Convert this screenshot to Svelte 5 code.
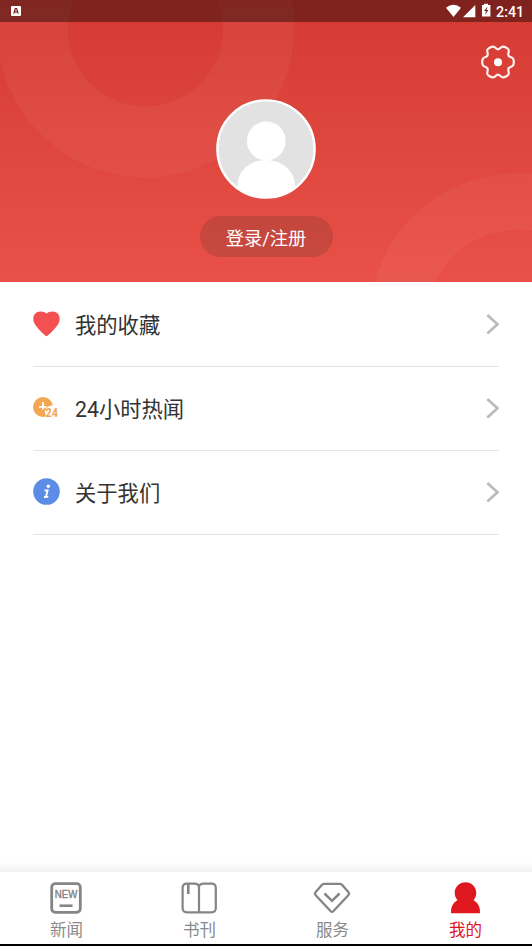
<script lang="ts">
	const rows = [
		{ icon: 'heart', label: '我的收藏' },
		{ icon: 'hot', label: '24小时热闻' },
		{ icon: 'about', label: '关于我们' }
	];

	const tabs = [
		{ icon: 'news', label: '新闻' },
		{ icon: 'book', label: '书刊' },
		{ icon: 'service', label: '服务' },
		{ icon: 'mine', label: '我的' }
	];

	let active = $state('mine');
</script>

<div class="screen">
	<header>
		<svg class="rings" width="532" height="282" viewBox="0 0 532 282">
			<circle cx="145.500" cy="29" r="113" stroke-width="71" />
			<circle cx="517.500" cy="321.600" r="120" stroke-width="56.500" />
		</svg>

		<div class="statusBar">
			<svg width="10" height="10" viewBox="0 0 10 10">
				<rect width="10" height="10" rx="1" fill="#fff" />
				<path d="M2.8 7.6L4.3 2.6H5.6L7.2 7.6M3.5 5.8H6.4" fill="none" stroke="#812620" stroke-width="1.3" />
			</svg>
			<div class="statusRight">
				<svg width="45" height="16" viewBox="0 0 45 16">
					<path d="M0 4.7Q7.5 -1 15 4.7L7.5 14z" fill="#fff" />
					<path d="M17 14.2L29.3 2V14.2z" fill="#fff" />
					<path d="M36 2H38V0.8H42V2H44.4V13.5H36z" fill="#fff" />
					<path d="M41.5 3.5L38 8H40L39 11.8L42.5 7H40.6z" fill="#812620" />
				</svg>
				<span class="clock">2:41</span>
			</div>
		</div>

		<button class="settings" aria-label="设置">
			<svg width="36" height="36" viewBox="-18 -18 36 36">
				<path
					d="M0-12.600C2-12.600 2.800-15.400 4.800-15.400C7-15.400 10.200-13.600 10.700-12C11.200-10 9.500-8 10.700-6.200C11.900-4.400 14.500-5 15.200-3.200C15.900-1.400 15.900 1.400 15.200 3.200C14.500 5 11.900 4.400 10.700 6.200C9.500 8 11.200 10 10.700 12C10.200 13.600 7 15.400 4.800 15.400C2.800 15.400 2 12.600 0 12.600C-2 12.600-2.800 15.400-4.800 15.400C-7 15.400-10.200 13.600-10.700 12C-11.200 10-9.500 8-10.700 6.200C-11.900 4.400-14.500 5-15.200 3.200C-15.900 1.400-15.900-1.400-15.200-3.200C-14.500-5-11.900-4.400-10.700-6.200C-9.500-8-11.200-10-10.700-12C-10.200-13.600-7-15.400-4.800-15.400C-2.800-15.400-2-12.600 0-12.600z"
					fill="none"
					stroke="#fff"
					stroke-opacity="0.93"
					stroke-width="2.200"
				/>
				<circle cy="0.3" r="4" fill="#fff" />
			</svg>
		</button>

		<svg class="avatar" width="100" height="100" viewBox="0 0 100 100">
			<defs>
				<clipPath id="face"><circle cx="50" cy="50" r="49" /></clipPath>
			</defs>
			<circle cx="50" cy="50" r="48.6" fill="#e2e2e2" stroke="#fff" stroke-width="2.4" />
			<g clip-path="url(#face)" fill="#fff">
				<circle cx="50.3" cy="42" r="19.4" />
				<path d="M21.5 92V86C22 71 35 61 50 61S78.500 71 79 86V100H21.500z" />
			</g>
		</svg>
		<button class="login">登录/注册</button>
	</header>

	<main>
		{#each rows as row}
			<div class="row">
				<svg class="rowIcon" width="28" height="28" viewBox="0 0 28 28">
					{#if row.icon == 'heart'}
						<path d="M13.500 26.200C12.500 26.200 8 22 4.500 17.800C2 14.800 0.300 12.300 0.300 8.800C0.300 4.500 3.400 1.500 7.200 1.500C10 1.500 12.300 2.300 13.500 3.600C14.700 2.300 17 1.500 19.800 1.500C23.600 1.500 26.700 4.500 26.700 8.800C26.700 12.300 25 14.800 22.500 17.800C19 22 14.500 26.200 13.500 26.200z" fill="#f44f51" />
					{:else if row.icon == 'hot'}
						<circle cx="10" cy="13" r="10" fill="#f3a653" />
						<path d="M10 8V15.500M6.200 12.800H13.500" stroke="#fff" stroke-width="1.800" fill="none" />
						<circle cx="19" cy="18.500" r="7" fill="#fff" />
						<path d="M13 14H25V23H13z" fill="#fff" />
						<text x="12.500" y="23" font-size="12.500" textLength="12.500" lengthAdjust="spacingAndGlyphs">24</text>
					{:else}
						<circle cx="13.500" cy="13.500" r="13.300" fill="#5c8de6" />
						<circle cx="15.300" cy="8.300" r="1.700" fill="#fff" />
						<path d="M11.500 12.300H14.600L13 18.800H15.300M11 19H13" stroke="#fff" stroke-width="1.800" fill="none" />
					{/if}
				</svg>
				<span>{row.label}</span>
				<svg class="chevron" width="14" height="22" viewBox="0 0 14 22">
					<path d="M2.300 1.900L12.500 11.200L2.300 20.500" />
				</svg>
			</div>
		{/each}
	</main>

	<nav>
		{#each tabs as tab}
			<button class="tab" class:active={active == tab.icon} onclick={() => (active = tab.icon)}>
				<svg width="38" height="34" viewBox="0 0 38 34">
					{#if tab.icon == 'news'}
						<rect x="4.700" y="2.700" width="28.600" height="28.600" rx="3.500" stroke-width="2.800" />
						<text x="7.800" y="17.300" font-size="10" textLength="22.600" lengthAdjust="spacingAndGlyphs">NEW</text>
						<path d="M12.500 24.700H25.500" stroke-width="2.600" />
					{:else if tab.icon == 'book'}
						<path d="M19 5.500C18.500 3.300 16.500 2.600 14.500 2.600H7C4 2.600 2.600 4 2.600 7V27C2.600 30 4 31.300 7 31.300H31.500C34.500 31.300 35.800 30 35.800 27V7C35.800 4 34.500 2.600 31.500 2.600H24C21.500 2.600 19.500 3.300 19 5.500V31" stroke-width="2.200" />
						<path d="M8.300 3V13" stroke-width="2.600" />
					{:else if tab.icon == 'service'}
						<path d="M11.200 2.800H26.800Q28 2.800 28.800 3.600L35.300 11Q36.700 12.600 35.300 14.200L20.300 30.200Q19 31.500 17.700 30.200L2.700 14.200Q1.300 12.600 2.700 11L9.200 3.600Q10 2.800 11.200 2.800z" stroke-width="2.300" />
						<path d="M11.500 12.500L19 19.800L26.500 12.500" stroke-width="2.500" />
					{:else}
						<path class="person" d="M19.500 1.200C25.500 1.200 30.300 6 30.300 11.700C30.300 15 29 17.500 27.500 19.200C31 21 33.900 25 33.900 29.500V32.300H5.100V29.500C5.100 25 8 21 11.500 19.200C10 17.500 8.700 15 8.700 11.700C8.700 6 13.500 1.200 19.500 1.200z" />
					{/if}
				</svg>
				<span>{tab.label}</span>
			</button>
		{/each}
	</nav>
</div>

<style>
	:global(body) {
		margin: 0;
		background: #000;
	}

	.screen {
		display: flex;
		flex-direction: column;
		width: 532px;
		height: 946px;
		box-sizing: border-box;
		border-bottom: 2px solid #000;
		background: #fff;
		font-family: Roboto, "Noto Sans CJK SC", sans-serif;
		overflow: hidden;
	}

	button {
		border: 0;
		padding: 0;
		margin: 0;
		background: none;
		font-family: inherit;
	}

	svg {
		display: block;
		flex: none;
	}

	header {
		position: relative;
		display: flex;
		flex-direction: column;
		align-items: center;
		height: 282px;
		flex: none;
		background: linear-gradient(#d43a32, #e95148);
	}

	.rings {
		position: absolute;
		left: 0;
		top: 0;
	}

	.rings circle {
		fill: none;
		stroke: #fff;
		stroke-opacity: 0.045;
	}

	.statusBar {
		position: relative;
		display: flex;
		align-items: center;
		justify-content: space-between;
		width: 100%;
		height: 22px;
		box-sizing: border-box;
		padding: 0 8px 0 11px;
		background: rgba(0, 0, 0, 0.4);
	}

	.statusRight {
		display: flex;
		align-items: center;
		gap: 5px;
	}

	.clock {
		width: 28px;
		padding-top: 2px;
		color: #fff;
		font-size: 14.3px;
		font-weight: 500;
		line-height: 22px;
		white-space: nowrap;
	}

	.settings {
		position: relative;
		align-self: flex-end;
		margin: 22px 16px 0 0;
	}

	.avatar {
		position: relative;
		margin-top: 19px;
	}

	.login {
		position: relative;
		width: 133px;
		height: 41px;
		margin-top: 17px;
		border-radius: 21px;
		background: rgba(70, 50, 40, 0.2);
		color: #fff;
		font-size: 18.3px;
		line-height: 41px;
		padding-top: 2px;
	}

	main {
		flex: 1;
		padding: 1px 33px 0;
	}

	.row {
		display: flex;
		align-items: center;
		height: 83px;
		border-bottom: 1px solid #e4e4e4;
		color: #333;
		font-size: 21.3px;
	}

	.row span {
		flex: 1;
		margin-left: 14px;
		line-height: 30px;
		padding-top: 3px;
	}

	.rowIcon {
		margin-bottom: 1px;
	}

	.rowIcon text {
		fill: #f3a653;
		font-family: Roboto, sans-serif;
		font-weight: 700;
	}

	.chevron {
		margin-bottom: 2px;
	}

	.chevron path {
		fill: none;
		stroke: #bbb;
		stroke-width: 2.7;
	}

	nav {
		display: flex;
		height: 82px;
		flex: none;
		box-sizing: border-box;
		padding-top: 10px;
		background: linear-gradient(#fff, #f0f0f0 10px, #fff 10px);
	}

	.tab {
		display: flex;
		flex-direction: column;
		align-items: center;
		flex: 1;
		padding-top: 9px;
		color: #8a8a8a;
		font-size: 16.5px;
		line-height: 26px;
	}

	.tab span {
		margin-top: 3px;
	}

	.tab svg {
		margin-right: 2px;
		fill: none;
		stroke: #858585;
	}

	.tab text {
		fill: #858585;
		stroke-width: 0.4px;
		font-family: "Liberation Sans", sans-serif;
	}

	.tab.active {
		color: #e0141e;
	}

	.tab .person {
		fill: #858585;
		stroke: none;
	}

	.tab.active .person {
		fill: #df1820;
	}
</style>
